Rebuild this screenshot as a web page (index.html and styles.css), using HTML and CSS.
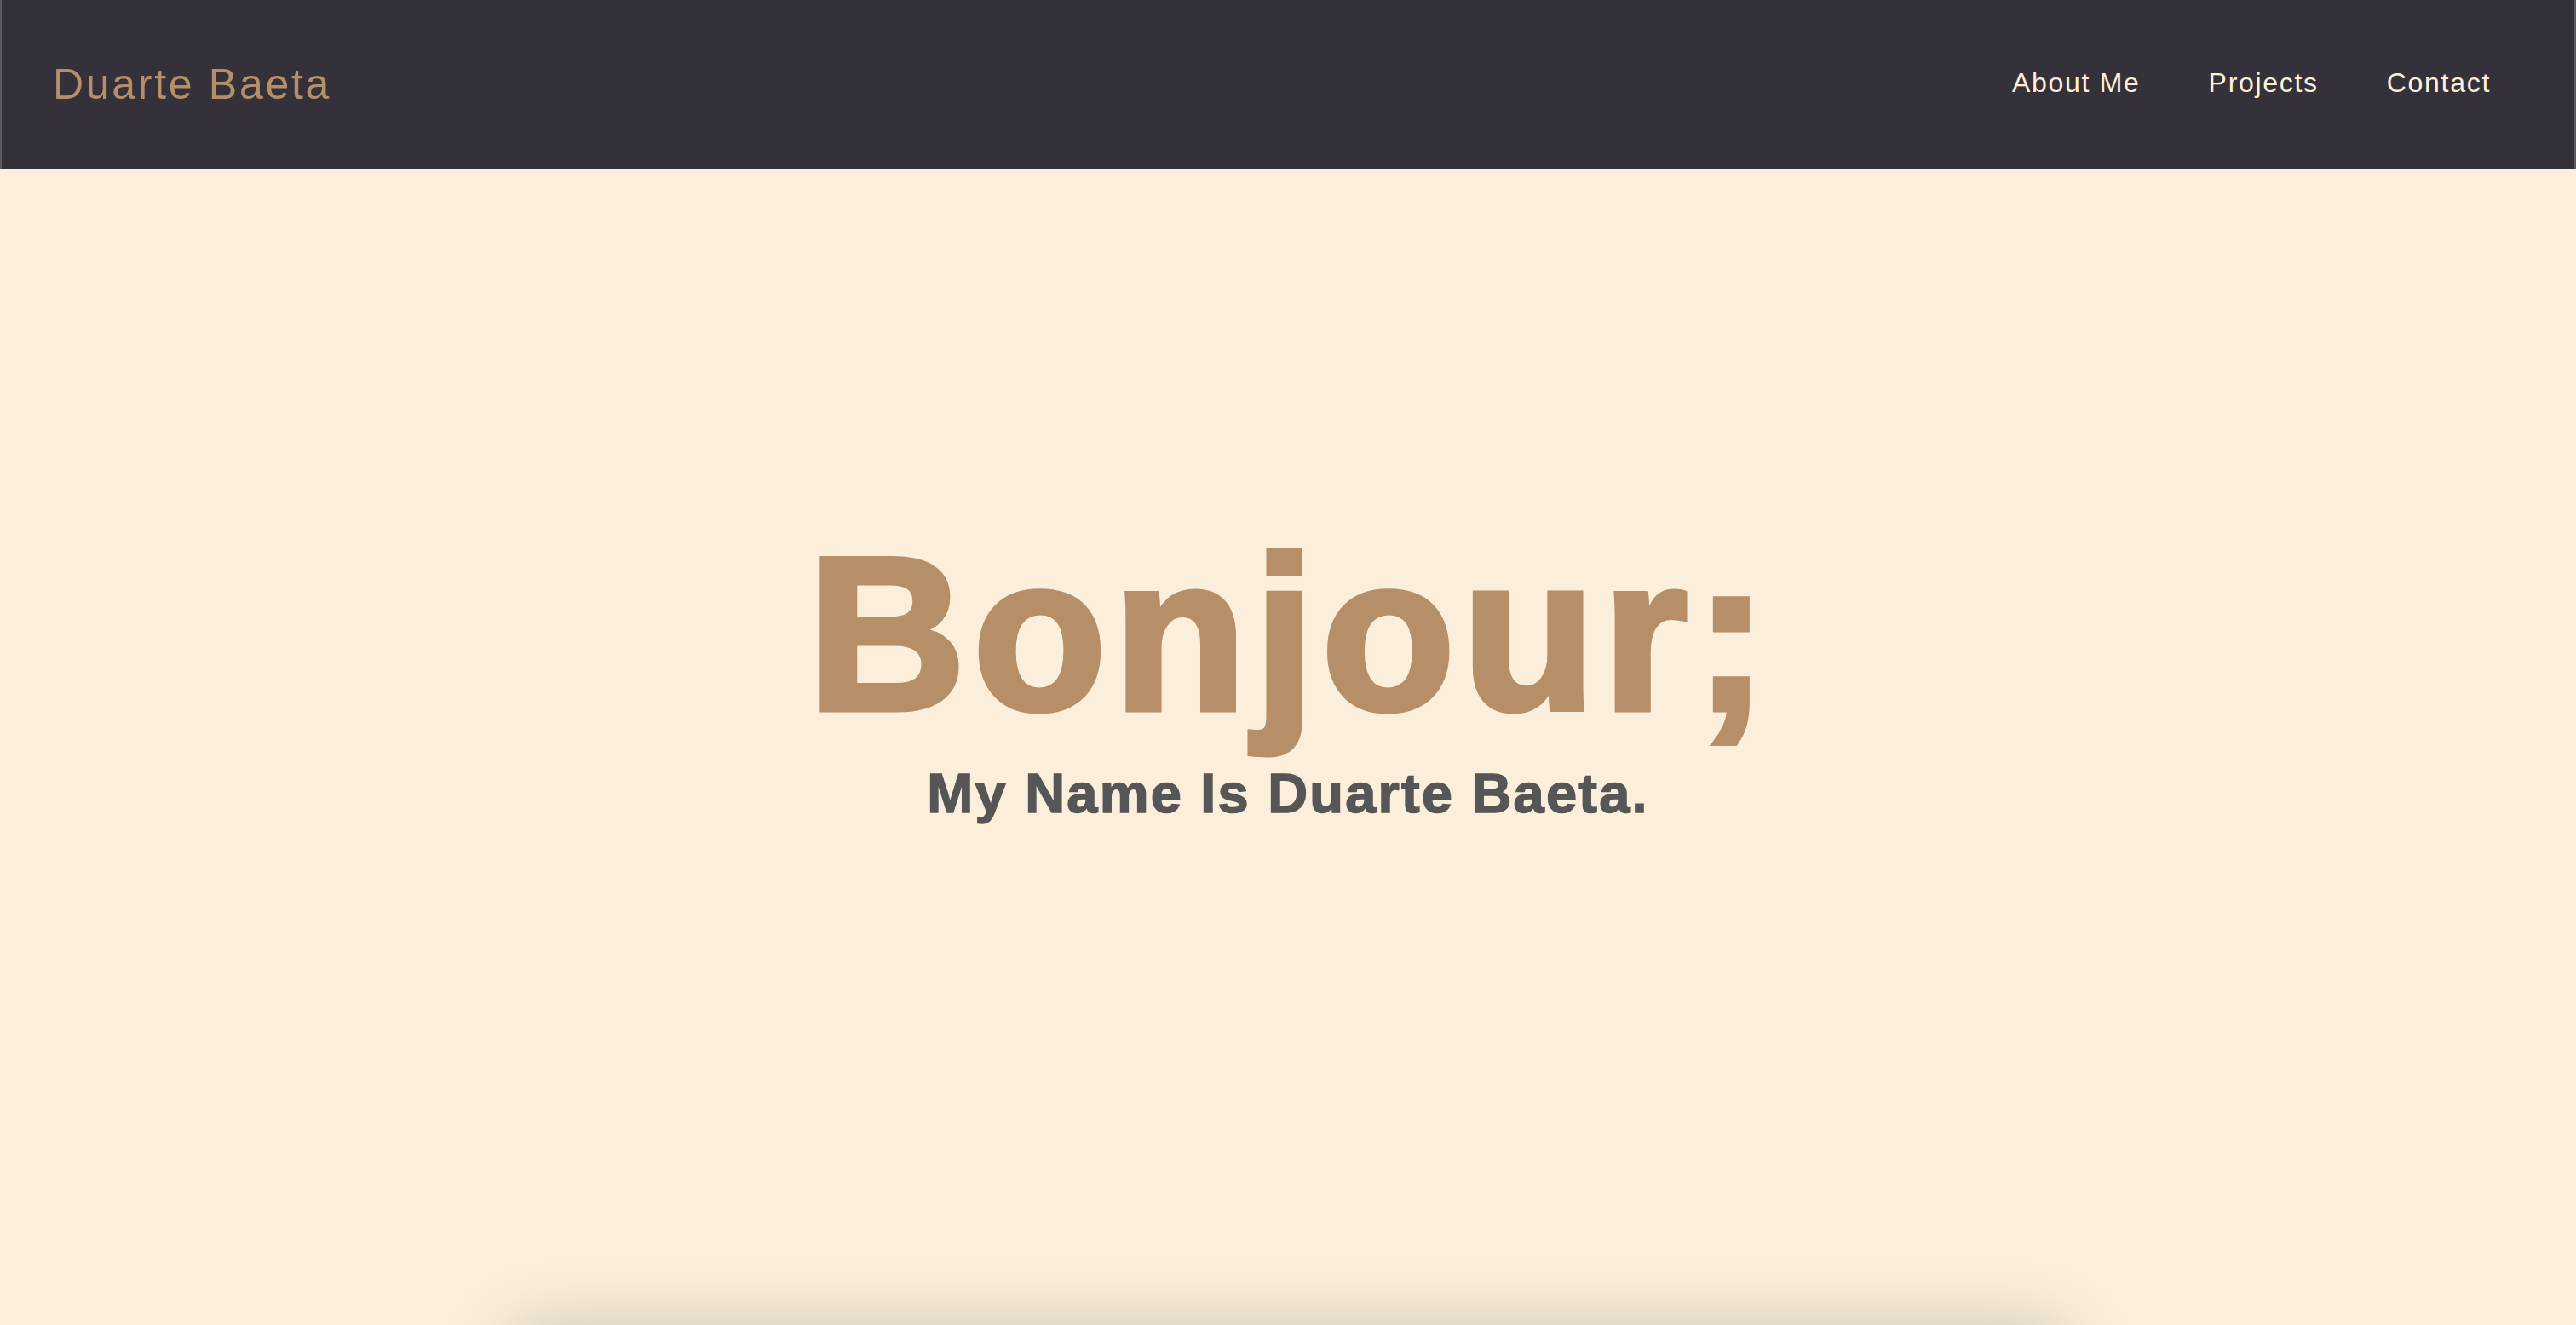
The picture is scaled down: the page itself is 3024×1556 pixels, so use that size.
FILE: index.html
```html
<!DOCTYPE html>
<html lang="en">
<head>
    <meta charset="UTF-8">
    <meta name="viewport" content="width=device-width, initial-scale=1.0">
    <title>Duarte Baeta</title>
    <link rel="stylesheet" href="styles.css">
</head>
<body>
    <header class="topbar">
        <a class="brand" href="#">Duarte Baeta</a>
        <nav class="menu">
            <a href="#about">About Me</a>
            <a href="#projects">Projects</a>
            <a href="#contact">Contact</a>
        </nav>
    </header>

    <section class="hero">
        <h1 class="hero-title">Bonjour;</h1>
        <h2 class="hero-sub">My Name Is Duarte Baeta.</h2>
    </section>

    <!-- about card, only its shadow shows above the fold -->
    <section class="about" id="about"></section>
</body>
</html>
```

FILE: styles.css
```css
body {
    margin: 0;
    background-color: #fbefdb;
    font-family: "Liberation Sans", Arial, sans-serif;
    overflow: hidden;
}

.topbar {
    height: 198px;
    box-sizing: border-box;
    display: flex;
    align-items: center;
    justify-content: space-between;
    padding: 0 98px 0 62px;
    background-color: #35313a;
    border-left: 2px solid #5c5a61;
    border-right: 2px solid #5c5a61;
}

.brand {
    color: #b58f68;
    font-size: 50px;
    letter-spacing: 2.7px;
    text-decoration: none;
    margin-left: -2px;
}

.menu {
    display: flex;
    gap: 80px;
    margin-top: -3px;
}

.menu a {
    color: #fcefdc;
    font-size: 32px;
    letter-spacing: 1.7px;
    text-decoration: none;
}

.hero {
    height: 1372px;
    box-sizing: border-box;
    padding-top: 418px;
    display: flex;
    flex-direction: column;
    align-items: center;
}

.hero-title {
    margin: 0;
    padding-left: 8px;
    color: #b68f69;
    font-size: 256px;
    line-height: 1;
    font-weight: 700;
    letter-spacing: 8.5px;
    -webkit-text-stroke: 7px #b68f69;
}

.hero-sub {
    margin: 22px 0 0;
    color: #565656;
    font-size: 65px;
    font-weight: 700;
    letter-spacing: 2.2px;
    -webkit-text-stroke: 1.5px #565656;
}

.about {
    width: 1814px;
    height: 600px;
    margin: 0 auto;
    background-color: #fbefdb;
    box-shadow: 0 0 80px rgba(0, 0, 0, 0.25);
}
```
